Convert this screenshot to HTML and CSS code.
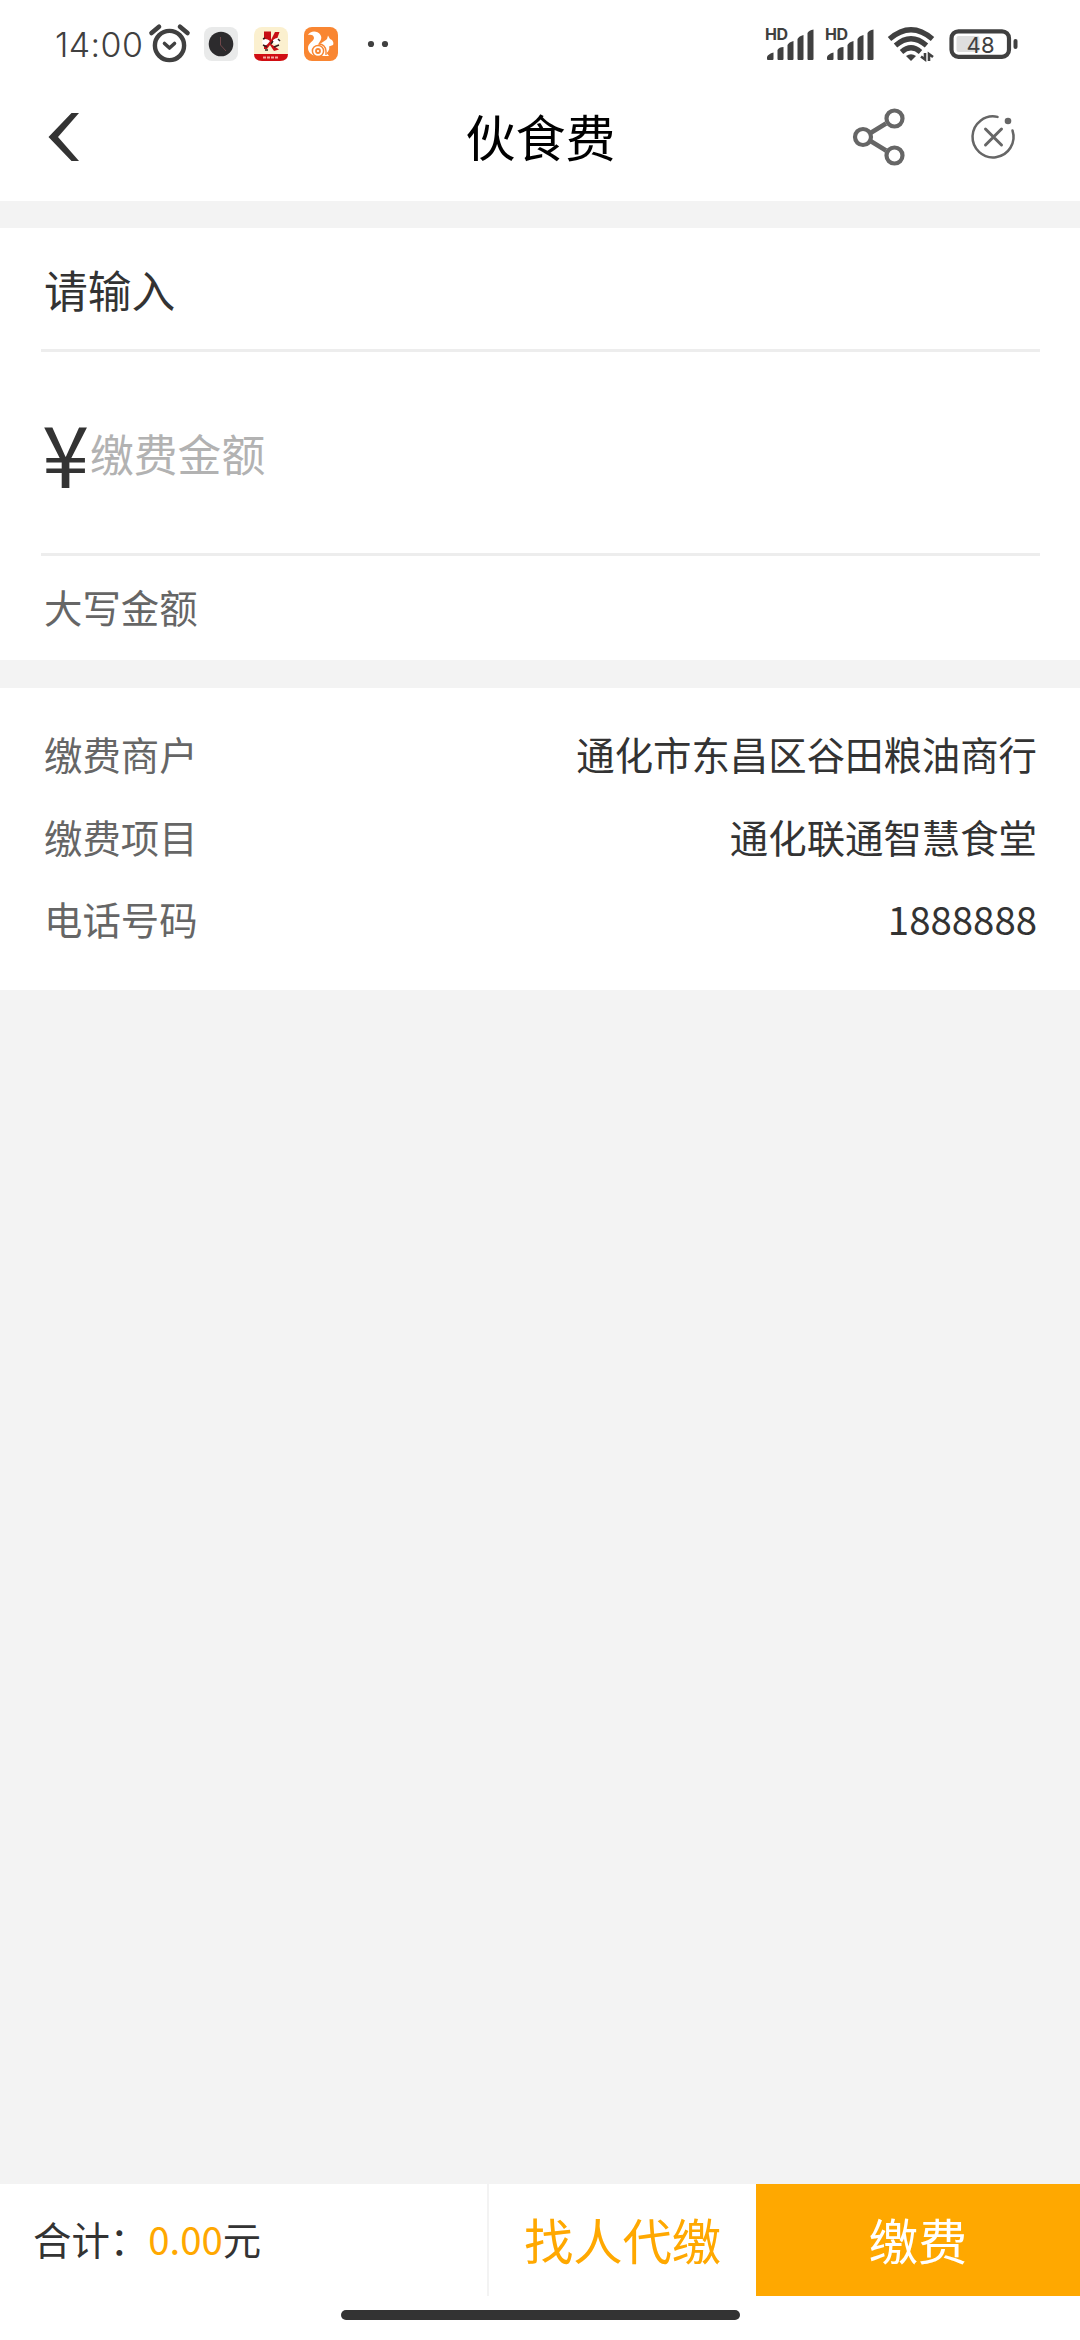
FILE: index.html
```html
<!DOCTYPE html>
<html lang="zh-CN">
<head>
    <meta charset="UTF-8">
    <meta name="viewport" content="width=device-width, initial-scale=1.0">
    <title>伙食费</title>
    <link rel="stylesheet" href="styles.css">
</head>
<body>
    <div class="page">
        <div class="status-bar">
            <span class="time">14:00</span>
            <svg class="alarm" width="42" height="40" viewBox="0 0 42 40" fill="none" stroke="#404040">
                <circle cx="20.5" cy="21.5" r="14.6" stroke-width="4.4"/>
                <path d="M2.5 9 L10 2.8 M31 2.8 L38.5 9" stroke-width="4.6" stroke-linecap="round"/>
                <path d="M15.5 19.5 L20.5 24 L25.5 19.5" stroke-width="3.6" stroke-linecap="round" stroke-linejoin="round"/>
            </svg>
            <div class="apps">
                <svg width="34" height="34" viewBox="0 0 34 34">
                    <rect width="34" height="34" rx="8" fill="#e9eaea"/>
                    <circle cx="17" cy="17" r="12.3" fill="#2c2b2d"/>
                    <path d="M16.5 10 V18 L22 24" fill="none" stroke="#70474a" stroke-width="1"/>
                </svg>
                <svg width="34" height="34" viewBox="0 0 34 34">
                    <rect width="34" height="34" rx="8" fill="#fbf0cf"/>
                    <path d="M0 27 H34 Q34 34 26 34 H8 Q0 34 0 27Z" fill="#d00d12"/>
                    <path d="M10 4.5 H17 V13 L21 5 H25.5 L23 12 L17 17 L25 22.5 L20 24 L16 18 L13 22 H10 V16 L15 13 H10Z" fill="#c80f15"/>
                    <path d="M8 14 Q11 10 16 14 Q12 20 9 18Z M19 13 Q24 9 26 13 Q26 19 19 16Z" fill="#fff"/>
                    <path d="M9 12 L11 11 M17 17 L19 14 M9 18 L13 20 M20 20 L25 18 M11 23 H14 M24 12 L26 14" stroke="#352020" stroke-width="1.5" fill="none"/>
                    <path d="M9 30.500 H25" stroke="#f4aaa0" stroke-width="2" stroke-dasharray="3 1"/>
                </svg>
                <svg width="34" height="34" viewBox="0 0 34 34">
                    <rect width="34" height="34" rx="8" fill="#f98632"/>
                    <path d="M4 8 C6 4 13 3 16.5 8 C19 12 15 15 14 18 C19 15 22 13 23 12 L24 8.5 L26 12 C29 13 30 16 29 18 L25 19.5 C26 22 24 25 22.5 26 L25 29 H12 C7 28 4 25 4 21 C4 16 10 14 10 11 C10 8 7 7 4 8Z" fill="#fff"/>
                    <circle cx="14" cy="24" r="5.6" fill="#fff" stroke="#f98632" stroke-width="1.5"/>
                    <circle cx="14" cy="24" r="2" fill="none" stroke="#f98632" stroke-width="1.8"/>
                    <path d="M15 17 Q21 17 22 24 V28" fill="none" stroke="#f98632" stroke-width="1.4"/>
                </svg>
            </div>
            <svg class="more" width="22" height="8" viewBox="0 0 22 8" fill="#404040">
                <circle cx="4" cy="4" r="3.1"/>
                <circle cx="18" cy="4" r="3.1"/>
            </svg>
            <div class="signals">
                <svg width="50" height="44" viewBox="0 -4 50 44" fill="#404040">
                    <text class="hd" x="0" y="14" textLength="23">HD</text>
                    <path d="M2 31 Q3 28 8.5 26.5 V33 Q8.5 34 7.5 34 H3 Q2 34 2 33Z M12.5 24 Q14 21 18.5 21 V33 Q18.5 34 17.5 34 H13.5 Q12.5 34 12.5 33Z M22.5 19 Q24 16 28.5 15 V33 Q28.5 34 27.5 34 H23.5 Q22.5 34 22.5 33Z M32.5 13 Q34 10 38.5 9 V33 Q38.5 34 37.5 34 H33.5 Q32.5 34 32.5 33Z M42.5 7 Q44 4 48.5 3.5 V33 Q48.5 34 47.5 34 H43.5 Q42.5 34 42.5 33Z"/>
                </svg>
                <svg width="50" height="44" viewBox="0 -4 50 44" fill="#404040">
                    <text class="hd" x="0" y="14" textLength="23">HD</text>
                    <path d="M2 31 Q3 28 8.5 26.5 V33 Q8.5 34 7.5 34 H3 Q2 34 2 33Z M12.5 24 Q14 21 18.5 21 V33 Q18.5 34 17.5 34 H13.5 Q12.5 34 12.5 33Z M22.5 19 Q24 16 28.5 15 V33 Q28.5 34 27.5 34 H23.5 Q22.5 34 22.5 33Z M32.5 13 Q34 10 38.5 9 V33 Q38.5 34 37.5 34 H33.5 Q32.5 34 32.5 33Z M42.5 7 Q44 4 48.5 3.5 V33 Q48.5 34 47.5 34 H43.5 Q42.5 34 42.5 33Z"/>
                </svg>
            </div>
            <svg class="wifi" width="46" height="36" viewBox="0 0 46 36" fill="none" stroke="#404040" stroke-width="5.2">
                <path d="M1.5 13 Q23 -5.5 44.5 13"/>
                <path d="M7.5 19.5 Q23 6 38.5 19.5"/>
                <path d="M13.5 26 Q23 17.5 32.5 26"/>
                <path d="M18 30 Q23 26.5 28 30 L23 35Z" fill="#404040" stroke="none"/>
                <path d="M37 27 V33.5 L33 30.5 M41 35 V28 L45 31" stroke-width="2.6"/>
            </svg>
            <svg class="battery" width="70" height="32" viewBox="0 0 70 32">
                <rect x="2.5" y="3.3" width="57.5" height="25.5" rx="7" fill="none" stroke="#404040" stroke-width="4.2"/>
                <rect x="7.5" y="8" width="23" height="16" rx="2" fill="#dedede"/>
                <rect x="64.5" y="11" width="4" height="10" rx="2" fill="#404040"/>
                <text class="level" x="17.5" y="24.5" textLength="28">48</text>
            </svg>
        </div>

        <div class="nav">
            <svg class="back" width="34" height="52" viewBox="0 0 34 52">
                <path d="M24.5 2 H32 L11 26 L32 50 H24.5 L1.5 26Z" fill="#333"/>
            </svg>
            <h1 class="title">伙食费</h1>
            <div class="actions">
                <svg width="54" height="60" viewBox="0 0 54 60" fill="none" stroke="#666" stroke-width="4.2">
                    <path d="M18.5 26 L34 16.5 M18.5 34 L34 43.5" stroke-width="4.6"/>
                    <circle cx="11" cy="30" r="8"/>
                    <circle cx="42.5" cy="11.5" r="8"/>
                    <circle cx="42.5" cy="48.5" r="8"/>
                </svg>
                <svg width="46" height="46" viewBox="0 0 46 46" fill="none" stroke="#666" stroke-width="2.5" stroke-linecap="round">
                    <path d="M27.5 2.9 A20.5 20.5 0 1 0 42.5 16.5"/>
                    <path d="M15.500 15 L31.500 31 M31.500 15 L15.500 31" stroke-width="3"/>
                    <circle cx="38" cy="7" r="3.3" fill="#666" stroke="none"/>
                </svg>
            </div>
        </div>

        <div class="card form">
            <div class="field name">请输入</div>
            <div class="field amount">
                <span class="yen">¥</span>
                <span class="placeholder">缴费金额</span>
            </div>
            <div class="field capital">大写金额</div>
        </div>

        <div class="card info">
            <div class="row"><span class="label">缴费商户</span><span>通化市东昌区谷田粮油商行</span></div>
            <div class="row"><span class="label">缴费项目</span><span>通化联通智慧食堂</span></div>
            <div class="row"><span class="label">电话号码</span><span>1888888</span></div>
        </div>

        <div class="footer">
            <div class="total">合计：<span class="price">0.00</span>元</div>
            <div class="button other">找人代缴</div>
            <div class="button pay">缴费</div>
        </div>
        <div class="home-area"><div class="home-bar"></div></div>
    </div>
</body>
</html>
```

FILE: styles.css
```css
* {
    box-sizing: border-box;
}
body {
    margin: 0;
    background-color: #f3f3f3;
    color: #333;
    font-family: "Noto Sans CJK SC", sans-serif;
}
svg {
    display: block;
    flex: none;
    overflow: visible;
}
.page {
    display: flex;
    flex-direction: column;
    width: 1080px;
    height: 2340px;
}

/* Status bar */
.status-bar {
    display: flex;
    align-items: center;
    height: 88px;
    padding: 0 61px 0 55px;
    background-color: #fff;
}
.time {
    width: 94px;
    padding-top: 2px;
    font-family: Inter, sans-serif;
    font-size: 34px;
    font-weight: 300;
    line-height: 40px;
    letter-spacing: 0.4px;
    color: #404040;
    white-space: nowrap;
}
.apps {
    display: flex;
    gap: 16px;
    margin-left: 13px;
}
.more {
    margin-left: 29px;
}
.signals {
    display: flex;
    gap: 10px;
    margin-left: auto;
}
.hd {
    font-family: Inter, sans-serif;
    font-size: 16px;
    font-weight: 700;
}
.wifi {
    margin-left: 13px;
}
.battery {
    margin-left: 15px;
}
.level {
    font-family: Inter, sans-serif;
    font-size: 22px;
    fill: #404040;
}

/* Title bar */
.nav {
    display: grid;
    grid-template-columns: 1fr auto 1fr;
    align-items: center;
    height: 113px;
    padding: 0 64px 15px 47px;
    background-color: #fff;
}
.title {
    margin: 0 -9px 4px 9px;
    font-size: 50px;
    font-weight: 400;
    line-height: 70px;
    color: #000;
}
.actions {
    display: flex;
    align-items: center;
    justify-content: flex-end;
    gap: 64px;
}

.card {
    margin-top: 27px;
    background-color: #fff;
}

/* Payment form */
.form {
    height: 432px;
    padding: 0 40px 0 41px;
}
.field {
    display: flex;
    align-items: center;
    padding-left: 3px;
}
.name {
    height: 124px;
    border-bottom: 3px solid #ededed;
    font-size: 43.8px;
}
.amount {
    height: 204px;
    border-bottom: 3px solid #ededed;
}
.yen {
    width: 48px;
    margin-left: -2px;
    padding-bottom: 3px;
    font-size: 85px;
    line-height: 100px;
}
.placeholder {
    font-size: 43.8px;
    color: #b2b2b2;
}
.capital {
    height: 104px;
    padding-bottom: 5px;
    font-size: 38.4px;
    color: #666;
}

/* Merchant info */
.info {
    height: 302px;
    margin-top: 28px;
    padding: 24px 43px 0 44px;
    font-size: 38.4px;
}
.row {
    display: flex;
    align-items: center;
    justify-content: space-between;
    height: 82.6px;
}
.label {
    color: #666;
}

/* Bottom bar */
.footer {
    display: flex;
    height: 112px;
    margin-top: auto;
    background-color: #fff;
}
.total {
    display: flex;
    align-items: center;
    width: 487px;
    padding: 0 0 4px 33px;
    font-size: 38.4px;
}
.price {
    color: #ffa800;
}
.button {
    display: flex;
    align-items: center;
    justify-content: center;
    padding-bottom: 4px;
    font-size: 49.3px;
}
.other {
    width: 269px;
    border-left: 2px solid #f3f3f3;
    color: #ffa800;
}
.pay {
    flex: 1;
    background-color: #ffa800;
    color: #fff;
}
.home-area {
    height: 44px;
    padding-top: 14px;
    background-color: #fff;
}
.home-bar {
    width: 399px;
    height: 10px;
    margin: 0 auto;
    border-radius: 5px;
    background-color: #333;
}
```
